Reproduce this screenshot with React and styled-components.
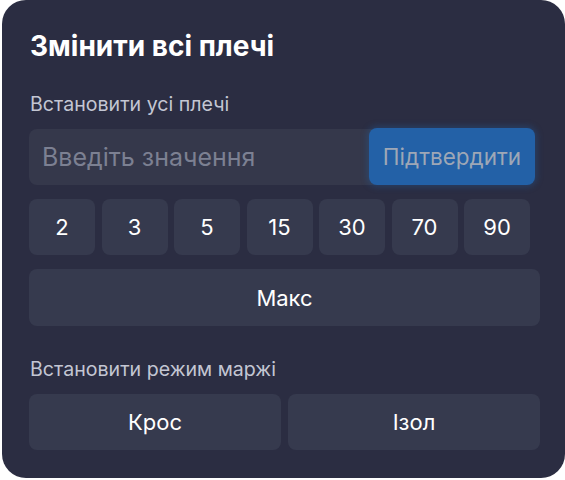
import React from "react";
import styled, { createGlobalStyle } from "styled-components";

const Global = createGlobalStyle`
  html, body { margin: 0; padding: 0; background: #ffffff; }
  body { font-family: Inter, "Noto Sans", sans-serif; }
  * { box-sizing: border-box; }
`;

const Card = styled.div`
  margin-left: 2px;
  width: 563px;
  height: 478px;
  background: #2b2d42;
  border-radius: 24px;
  padding: 28px 25px 0 27px;
  display: flex;
  flex-direction: column;
`;

const Title = styled.h1`
  margin: 0 0 0 1px;
  font-size: 28px;
  line-height: 36px;
  font-weight: 700;
  color: #ffffff;
`;

const Label = styled.div`
  margin: ${(p) => p.$mt || 0}px 0 0 1px;
  font-size: 19.6px;
  line-height: 24px;
  color: #c3c6d3;
`;

const InputRow = styled.div`
  margin-top: 12px;
  display: flex;
  width: 506px;
  height: 57px;
`;

const Input = styled.input`
  flex: 1 1 auto;
  min-width: 0;
  margin: 1px -20px 0 0;
  height: 56px;
  background: #35384b;
  border: none;
  border-radius: 8px;
  padding: 0 13px;
  font-family: inherit;
  font-size: 25px;
  color: #ffffff;
  outline: none;
  &::placeholder { color: #7c8092; }
`;

const Confirm = styled.button`
  position: relative;
  flex: 0 0 166px;
  width: 166px;
  height: 57px;
  background: #2361a7;
  border: none;
  border-radius: 8px;
  box-shadow: 0 0 6px 2px rgba(35, 97, 167, 0.35);
  font-family: inherit;
  font-size: 22.5px;
  color: #9ea7b6;
  padding: 0;
`;

const Chips = styled.div`
  margin-top: 14px;
  display: grid;
  grid-template-columns: repeat(7, 66px);
  column-gap: 6.5px;
`;

const Btn = styled.button`
  height: 56px;
  background: #363a4e;
  border: none;
  border-radius: 8px;
  font-family: inherit;
  font-size: 22px;
  color: #ffffff;
  padding: 0;
`;

const Wide = styled(Btn)`
  margin-top: 14px;
  width: 511px;
  height: 57px;
`;

const Modes = styled.div`
  margin-top: 13px;
  display: grid;
  grid-template-columns: 1fr 1fr;
  column-gap: 7px;
  width: 511px;
`;

export default function App() {
  const values = [2, 3, 5, 15, 30, 70, 90];
  return (
    <>
      <Global />
      <Card>
        <Title>Змінити всі плечі</Title>
        <Label $mt={28}>Встановити усі плечі</Label>
        <InputRow>
          <Input placeholder="Введіть значення" />
          <Confirm>Підтвердити</Confirm>
        </InputRow>
        <Chips>
          {values.map((v) => (
            <Btn key={v}>{v}</Btn>
          ))}
        </Chips>
        <Wide>Макс</Wide>
        <Label $mt={31}>Встановити режим маржі</Label>
        <Modes>
          <Btn>Крос</Btn>
          <Btn>Ізол</Btn>
        </Modes>
      </Card>
    </>
  );
}
